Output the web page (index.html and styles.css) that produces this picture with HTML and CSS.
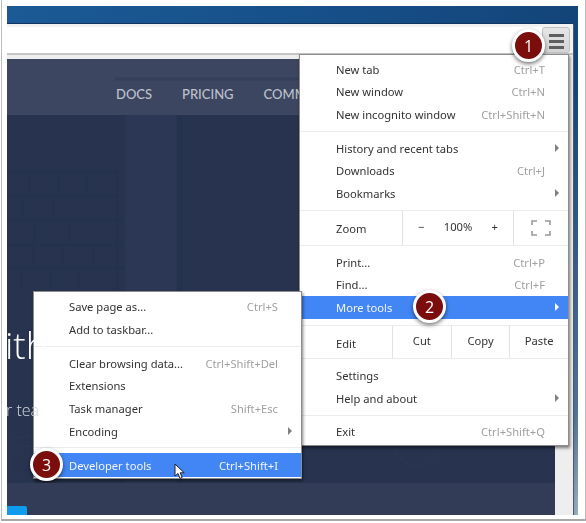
FILE: index.html
```html
<!DOCTYPE html>
<html lang="en">
<head>
<meta charset="utf-8">
<title>Chrome menu: More tools, Developer tools</title>
<link rel="stylesheet" href="styles.css">
</head>
<body>
<div class="shot">
  <div class="desktop">
    <div class="window">
      <div class="toolbar">
        <div class="address"></div>
        <div class="burger"><span></span><span></span><span></span></div>
      </div>
      <div class="content">
        <div class="page">
          <div class="nav">
            <a class="nav-docs">DOCS</a>
            <a class="nav-pricing">PRICING</a>
            <a>COMM</a>
          </div>
          <div class="hero">
            <div class="hero-title">ith</div>
            <div class="hero-sub">r tea</div>
          </div>
          <div class="band"><span class="cta"></span></div>
          <svg class="decor" width="548" height="456" viewBox="0 0 548 456">
            <path d="M118 56H170V424H118Z" fill="#32405e" opacity=".35"/>
            <g fill="none" stroke="#213250" stroke-width="3" opacity=".45">
              <path d="M108 20H300" opacity=".6"/>
              <path d="M0 113H110V232"/>
              <path d="M22 113v24M52 113v24M80 113v24M0 137H112M16 137v24M46 137v24M0 161H114M28 161v23M62 161v23M0 186H116M26 186v23M56 186v23M86 186v23M0 209H118M14 209v20M44 209v20M72 209v20"/>
              <path d="M171 56V424M174 56V424" opacity=".8"/>
            </g>
            <g fill="none" stroke="#33425f" stroke-width="1" opacity=".35">
              <circle cx="20" cy="405" r="28"/>
              <circle cx="20" cy="405" r="18"/>
              <circle cx="410" cy="385" r="22"/>
            </g>
          </svg>
        </div>
        <div class="gutter"></div>
      </div>
    </div>
  </div>

  <div class="menu menu-main">
    <div class="item"><span>New tab</span><kbd>Ctrl+T</kbd></div>
    <div class="item"><span>New window</span><kbd>Ctrl+N</kbd></div>
    <div class="item"><span>New incognito window</span><kbd>Ctrl+Shift+N</kbd></div>
    <hr class="sep">
    <div class="item"><span>History and recent tabs</span><i class="arrow"></i></div>
    <div class="item"><span>Downloads</span><kbd>Ctrl+J</kbd></div>
    <div class="item"><span>Bookmarks</span><i class="arrow"></i></div>
    <div class="tools zoom-row">
      <span class="tools-label">Zoom</span>
      <div class="zoom-ctl"><span>−</span><span class="pct">100%</span><span>+</span></div>
      <div class="full">
        <svg width="20" height="16" viewBox="0 0 20 16"><path d="M1 5V1H6M14 1H19V5M19 11V15H14M6 15H1V11" fill="none" stroke="#9a9a9a" stroke-width="1.6"/></svg>
      </div>
    </div>
    <div class="item"><span>Print...</span><kbd>Ctrl+P</kbd></div>
    <div class="item"><span>Find...</span><kbd>Ctrl+F</kbd></div>
    <div class="item active"><span>More tools</span><i class="arrow"></i></div>
    <div class="tools edit-row">
      <span class="tools-label">Edit</span>
      <span class="cell">Cut</span><span class="cell">Copy</span><span class="cell">Paste</span>
    </div>
    <div class="item"><span>Settings</span></div>
    <div class="item"><span>Help and about</span><i class="arrow"></i></div>
    <hr class="sep">
    <div class="item"><span>Exit</span><kbd>Ctrl+Shift+Q</kbd></div>
  </div>

  <div class="menu menu-sub">
    <div class="item"><span>Save page as...</span><kbd>Ctrl+S</kbd></div>
    <div class="item"><span>Add to taskbar...</span></div>
    <hr class="sep">
    <div class="item"><span>Clear browsing data...</span><kbd>Ctrl+Shift+Del</kbd></div>
    <div class="item"><span>Extensions</span></div>
    <div class="item"><span>Task manager</span><kbd>Shift+Esc</kbd></div>
    <div class="item"><span>Encoding</span><i class="arrow"></i></div>
    <hr class="sep">
    <div class="item active"><span>Developer tools</span><kbd>Ctrl+Shift+I</kbd></div>
  </div>

  <div class="badge badge-1">1</div>
  <div class="badge badge-2">2</div>
  <div class="badge badge-3">3</div>

  <svg class="cursor" width="12" height="17" viewBox="0 0 12 17">
    <path d="M1 1V13L4 10.5L6 15.5L8.2 14.5L6.2 9.8H10.2Z" fill="#fff" stroke="#222" stroke-width="1"/>
  </svg>
</div>
</body>
</html>
```

FILE: styles.css
```css
* { box-sizing: border-box; }
html, body { margin: 0; padding: 0; background: #fff; }
body { width: 586px; height: 523px; overflow: hidden; font-family: "Noto Sans", "Open Sans", sans-serif; }

.shot {
  position: relative;
  width: 585px;
  height: 521px;
  margin-left: 1px;
  padding: 6px 7px 5px 5px;
  border-left: 1px solid #bdbdbd;
  border-right: 1px solid #bdbdbd;
  border-bottom: 2px solid #a8a8a8;
  background: #fff;
}

.desktop {
  height: 509px;
  padding: 17px 4px 0 0;
  background: linear-gradient(100deg, #1b5a96 0%, #164f88 50%, #134478 88%, #4e7296 97%, #9fb0c0 100%);
}
.window {
  height: 492px;
  display: flex;
  flex-direction: column;
  background: #f0f0f0;
  border-top: 1px solid #0f3560;
  border-top-right-radius: 4px;
  border-right: 1px solid #4d5a6a;
}
.toolbar {
  flex: none;
  height: 31px;
  display: flex;
  align-items: flex-start;
  padding-top: 3px;
  background: #f2f2f2;
  border-bottom: 2px solid #c6c6c6;
}
.address { flex: 1; height: 26px; background: #fff; }
.burger {
  flex: none;
  width: 28px;
  height: 26px;
  margin-right: 3px;
  display: flex;
  flex-direction: column;
  align-items: center;
  gap: 3px;
  padding-top: 6px;
  background: linear-gradient(#e6e6e6, #d4d4d4);
  border: 1px solid #c2c2c2;
  border-radius: 3px;
}
.burger span { width: 15px; height: 3px; background: #5f5f5f; }
.content { flex: 1; min-height: 0; display: flex; padding-top: 4px; background: #eee; }
.page {
  position: relative;
  width: 548px;
  display: flex;
  flex-direction: column;
  overflow: hidden;
  background: #28344f;
}
.gutter { flex: 1; }
.decor { position: absolute; left: 0; top: 0; }

.nav {
  position: relative;
  flex: none;
  height: 56px;
  display: flex;
  padding: 26px 0 0 109px;
  gap: 30px;
  background: #3c4660;
  color: #bcc1cc;
  font: 500 13px/18px "Lato", "Open Sans", sans-serif;
  white-space: nowrap;
}
.hero { position: relative; z-index: 1; flex: 1; color: #fff; font-family: "Open Sans", sans-serif; font-weight: 300; }
.hero-title { margin: 208px 0 0 -2px; font-size: 37px; line-height: 44px; }
.hero-sub { margin: 31px 0 0 -1px; font-size: 16px; line-height: 24px; color: #d5d9e0; }
.band { position: relative; z-index: 1; flex: none; height: 32px; display: flex; align-items: flex-end; background: #323c56; }
.cta { width: 20px; height: 9px; background: #0f9bee; border-top-right-radius: 2px; }

.menu {
  position: absolute;
  background: #fff;
  border: 1px solid #8d8d8d;
  box-shadow: 1px 2px 3px rgba(0, 0, 0, .5);
  color: #333;
  font-size: 11.2px;
  white-space: nowrap;
}
.menu-main { left: 297px; top: 54px; width: 270px; height: 392px; padding-top: 3px; }
.menu-sub { left: 31px; top: 291px; width: 269px; height: 188px; padding-top: 3.5px; }
.item {
  display: flex;
  justify-content: space-between;
  align-items: center;
  height: 22.67px;
  padding: 0 23px 0 36px;
  position: relative;
}
.menu-sub .item { padding-left: 35px; }
.item kbd { font: inherit; color: #a0a0a0; }
.sep { height: 1px; margin: 5px 0; border: 0; background: #ececec; }
.arrow {
  position: absolute;
  right: 9px;
  top: 7px;
  border-left: 4px solid #808080;
  border-top: 4px solid transparent;
  border-bottom: 4px solid transparent;
}
.active { background: #4285f4; color: #f2f5fb; }
.active kbd { color: #f2f5fb; }
.active .arrow { border-left-color: #fff; }
.menu-main .active { height: 23px; margin-left: 1px; padding-left: 35px; }
.menu-sub .active { height: 24px; }

.tools {
  display: flex;
  align-items: stretch;
  border-top: 1px solid #ececec;
  border-bottom: 1px solid #ececec;
}
.tools-label { display: flex; align-items: center; padding: 2px 0 0 36px; }
.zoom-row { height: 36px; margin: 5px 0 5px; }
.zoom-row .tools-label { width: 102px; }
.zoom-ctl {
  width: 112px;
  display: flex;
  justify-content: space-between;
  align-items: center;
  padding: 0 15px 2px;
  border-left: 1px solid #e2e2e2;
  border-right: 1px solid #e2e2e2;
}
.full { flex: 1; display: flex; align-items: center; justify-content: center; }
.edit-row { height: 34px; margin: 6px 0 5px; }
.edit-row .tools-label { width: 92px; }
.cell {
  flex: 1;
  display: flex;
  align-items: center;
  justify-content: center;
  padding-bottom: 3px;
  border-left: 1px solid #e2e2e2;
}

.badge {
  position: absolute;
  width: 33px;
  height: 33px;
  display: flex;
  align-items: center;
  justify-content: center;
  border: 3px solid #fff;
  border-radius: 50%;
  background: #7b0d0d;
  box-shadow: 0 2px 4px rgba(0, 0, 0, .55);
  color: #fff;
  font: 16px "Open Sans", sans-serif;
}
.badge-1 { left: 510px; top: 29px; }
.badge-2 { left: 411px; top: 290px; }
.badge-3 { left: 28px; top: 448px; }
.cursor { position: absolute; left: 172px; top: 463px; }
```
